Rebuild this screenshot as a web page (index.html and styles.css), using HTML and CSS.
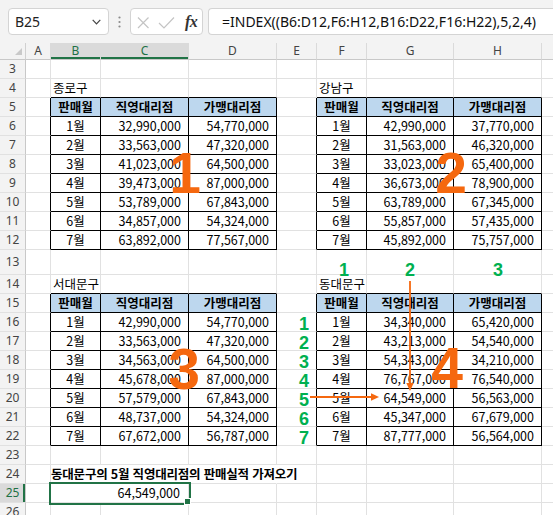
FILE: index.html
```html
<!DOCTYPE html>
<html lang="ko">
<head>
<meta charset="utf-8">
<link rel="stylesheet" href="styles.css">
</head>
<body>
<div class="app">
  <div class="fbar">
    <div class="namebox"><span>B25</span><svg class="chev" width="9" height="6" viewBox="0 0 9 6"><path d="M0.7 0.8 L4.5 4.8 L8.3 0.8" fill="none" stroke="#444" stroke-width="1.2"/></svg></div>
    <div class="dots"><svg width="3" height="12" viewBox="0 0 3 12"><circle cx="1.5" cy="1.5" r="1.1" fill="#8a8a8a"/><circle cx="1.5" cy="6" r="1.1" fill="#8a8a8a"/><circle cx="1.5" cy="10.5" r="1.1" fill="#8a8a8a"/></svg></div>
    <div class="fxbox">
      <svg class="xc" width="50" height="25" viewBox="0 0 50 25"><path d="M7 8.5 L17.5 19 M17.5 8.5 L7 19" stroke="#c4c4c4" stroke-width="1.2" fill="none"/><path d="M28 14 L33 19 L43 8.5" stroke="#c4c4c4" stroke-width="1.2" fill="none"/></svg>
      <span class="fx">fx</span>
    </div>
    <div class="formula">=INDEX((B6:D12,F6:H12,B16:D22,F16:H22),5,2,4)</div>
  </div>

  <table class="sheet">
    <colgroup>
      <col class="w0"><col class="wa"><col class="wb"><col class="wc"><col class="wd"><col class="we"><col class="wf"><col class="wg"><col class="wh"><col class="wi">
    </colgroup>
    <tr class="hr">
      <th class="corner"><svg width="26" height="16" viewBox="0 0 26 16"><polygon points="22,5 22,12 15,12" fill="#c9c9c9"/></svg></th>
      <th class="ch">A</th><th class="ch chs">B</th><th class="ch chs">C</th><th class="ch">D</th><th class="ch">E</th><th class="ch">F</th><th class="ch">G</th><th class="ch">H</th><th class="ch"></th>
    </tr>
    <tr><th class="rh">3</th><td></td><td></td><td></td><td></td><td></td><td></td><td></td><td></td><td></td></tr>
    <tr><th class="rh">4</th><td></td><td class="tb t">종로구</td><td class="tb"></td><td class="tb"></td><td></td><td class="tb t">강남구</td><td class="tb"></td><td class="tb"></td><td></td></tr>
    <tr><th class="rh">5</th><td class="lb"></td><td class="h">판매월</td><td class="h">직영대리점</td><td class="h">가맹대리점</td><td class="lb"></td><td class="h">판매월</td><td class="h">직영대리점</td><td class="h">가맹대리점</td><td></td></tr>
    <tr><th class="rh">6</th><td class="lb"></td><td class="k m">1월</td><td class="k n">32,990,000</td><td class="k n">54,770,000</td><td class="lb"></td><td class="k m">1월</td><td class="k n">42,990,000</td><td class="k n">37,770,000</td><td></td></tr>
    <tr><th class="rh">7</th><td class="lb"></td><td class="k m">2월</td><td class="k n">33,563,000</td><td class="k n">47,320,000</td><td class="lb"></td><td class="k m">2월</td><td class="k n">31,563,000</td><td class="k n">46,320,000</td><td></td></tr>
    <tr><th class="rh">8</th><td class="lb"></td><td class="k m">3월</td><td class="k n">41,023,000</td><td class="k n">64,500,000</td><td class="lb"></td><td class="k m">3월</td><td class="k n">33,023,000</td><td class="k n">65,400,000</td><td></td></tr>
    <tr><th class="rh">9</th><td class="lb"></td><td class="k m">4월</td><td class="k n">39,473,000</td><td class="k n">87,000,000</td><td class="lb"></td><td class="k m">4월</td><td class="k n">36,673,000</td><td class="k n">78,900,000</td><td></td></tr>
    <tr><th class="rh">10</th><td class="lb"></td><td class="k m">5월</td><td class="k n">53,789,000</td><td class="k n">67,843,000</td><td class="lb"></td><td class="k m">5월</td><td class="k n">63,789,000</td><td class="k n">67,345,000</td><td></td></tr>
    <tr><th class="rh">11</th><td class="lb"></td><td class="k m">6월</td><td class="k n">34,857,000</td><td class="k n">54,324,000</td><td class="lb"></td><td class="k m">6월</td><td class="k n">55,857,000</td><td class="k n">57,435,000</td><td></td></tr>
    <tr><th class="rh">12</th><td class="lb"></td><td class="k m">7월</td><td class="k n">63,892,000</td><td class="k n">77,567,000</td><td class="lb"></td><td class="k m">7월</td><td class="k n">45,892,000</td><td class="k n">75,757,000</td><td></td></tr>
    <tr class="tall"><th class="rh">13</th><td></td><td></td><td></td><td></td><td></td><td></td><td></td><td></td><td></td></tr>
    <tr><th class="rh">14</th><td></td><td class="tb t">서대문구</td><td class="tb"></td><td class="tb"></td><td></td><td class="tb t">동대문구</td><td class="tb"></td><td class="tb"></td><td></td></tr>
    <tr><th class="rh">15</th><td class="lb"></td><td class="h">판매월</td><td class="h">직영대리점</td><td class="h">가맹대리점</td><td class="lb"></td><td class="h">판매월</td><td class="h">직영대리점</td><td class="h">가맹대리점</td><td></td></tr>
    <tr><th class="rh">16</th><td class="lb"></td><td class="k m">1월</td><td class="k n">42,990,000</td><td class="k n">54,770,000</td><td class="lb"></td><td class="k m">1월</td><td class="k n">34,340,000</td><td class="k n">65,420,000</td><td></td></tr>
    <tr><th class="rh">17</th><td class="lb"></td><td class="k m">2월</td><td class="k n">33,563,000</td><td class="k n">47,320,000</td><td class="lb"></td><td class="k m">2월</td><td class="k n">43,213,000</td><td class="k n">54,540,000</td><td></td></tr>
    <tr><th class="rh">18</th><td class="lb"></td><td class="k m">3월</td><td class="k n">34,563,000</td><td class="k n">64,500,000</td><td class="lb"></td><td class="k m">3월</td><td class="k n">54,343,000</td><td class="k n">34,210,000</td><td></td></tr>
    <tr><th class="rh">19</th><td class="lb"></td><td class="k m">4월</td><td class="k n">45,678,000</td><td class="k n">87,000,000</td><td class="lb"></td><td class="k m">4월</td><td class="k n">76,767,000</td><td class="k n">76,540,000</td><td></td></tr>
    <tr><th class="rh">20</th><td class="lb"></td><td class="k m">5월</td><td class="k n">57,579,000</td><td class="k n">67,843,000</td><td class="lb"></td><td class="k m">5월</td><td class="k n">64,549,000</td><td class="k n">56,563,000</td><td></td></tr>
    <tr><th class="rh">21</th><td class="lb"></td><td class="k m">6월</td><td class="k n">48,737,000</td><td class="k n">54,324,000</td><td class="lb"></td><td class="k m">6월</td><td class="k n">45,347,000</td><td class="k n">67,679,000</td><td></td></tr>
    <tr><th class="rh">22</th><td class="lb"></td><td class="k m">7월</td><td class="k n">67,672,000</td><td class="k n">56,787,000</td><td class="lb"></td><td class="k m">7월</td><td class="k n">87,777,000</td><td class="k n">56,564,000</td><td></td></tr>
    <tr><th class="rh">23</th><td></td><td></td><td></td><td></td><td></td><td></td><td></td><td></td><td></td></tr>
    <tr><th class="rh">24</th><td></td><td class="nr ttl">동대문구의 5월 직영대리점의 판매실적 가져오기</td><td class="nr"></td><td class="nr"></td><td></td><td></td><td></td><td></td><td></td></tr>
    <tr><th class="rh rhs">25</th><td></td><td class="n sel" colspan="2">64,549,000</td><td></td><td></td><td></td><td></td><td></td><td></td></tr>
    <tr><th class="rh">26</th><td></td><td></td><td></td><td></td><td></td><td></td><td></td><td></td><td></td></tr>
  </table>

  <svg class="ov" width="553" height="515" viewBox="0 0 553 515">
    <text class="big" x="185" y="193">1</text>
    <text class="big" x="451" y="193">2</text>
    <text class="big" x="184" y="389">3</text>
    <text class="big" x="447" y="388">4</text>
    <text class="gn" x="344" y="276">1</text>
    <text class="gn" x="410" y="276">2</text>
    <text class="gn" x="498" y="276">3</text>
    <text class="gn" x="304" y="330">1</text>
    <text class="gn" x="304" y="349">2</text>
    <text class="gn" x="304" y="368">3</text>
    <text class="gn" x="304" y="387">4</text>
    <text class="gn" x="304" y="406">5</text>
    <text class="gn" x="304" y="425">6</text>
    <text class="gn" x="304" y="444">7</text>
    <line class="ar" x1="410" y1="281" x2="410" y2="384"/>
    <polygon class="ah" points="406.3,383 413.7,383 410,391"/>
    <line class="ar" x1="310" y1="397" x2="372" y2="397"/>
    <polygon class="ah" points="371,393.3 371,400.7 379,397"/>
  </svg>
</div>
</body>
</html>
```
FILE: styles.css
```css
html, body {
  margin: 0;
  padding: 0;
  overflow: hidden;
  background: #fff;
}
.app {
  position: relative;
  width: 553px;
  height: 515px;
  overflow: hidden;
}
.fbar {
  height: 43px;
  box-sizing: border-box;
  background: #f3f3f3;
  display: flex;
  align-items: flex-start;
  padding: 8px 0 0 8px;
}
.namebox {
  width: 101px;
  height: 27px;
  box-sizing: border-box;
  background: #fff;
  border: 1px solid #d4d4d4;
  border-radius: 4px;
  display: flex;
  align-items: center;
  justify-content: space-between;
  padding: 0 7px 0 6px;
  font: 14px "Noto Sans", sans-serif;
  color: #222;
}
.chev { display: block; }
.dots {
  width: 21px;
  height: 27px;
  display: flex;
  align-items: center;
  justify-content: center;
}
.dots svg { display: block; }
.fxbox {
  width: 73px;
  height: 27px;
  box-sizing: border-box;
  background: #fff;
  border: 1px solid #d4d4d4;
  border-radius: 4px;
  display: flex;
  align-items: center;
}
.xc { display: block; }
.fx {
  margin-left: 4px;
  font: italic 700 16px "Liberation Serif", serif;
  color: #333;
  letter-spacing: -0.5px;
}
.formula {
  margin-left: 5px;
  flex: 1;
  height: 27px;
  box-sizing: border-box;
  background: #fff;
  border: 1px solid #d4d4d4;
  border-right: none;
  border-radius: 4px 0 0 4px;
  padding-left: 13px;
  display: flex;
  align-items: center;
  font: 14px "Noto Sans", sans-serif;
  color: #111;
  white-space: nowrap;
}

.sheet {
  border-collapse: separate;
  border-spacing: 0;
  table-layout: fixed;
  width: 572px;
  font-family: "Noto Sans CJK KR", "Noto Sans", sans-serif;
  font-size: 12.5px;
  color: #000;
}
.w0 { width: 26px; }
.wa { width: 25px; }
.wb { width: 50px; }
.wc { width: 88px; }
.wd { width: 88px; }
.we { width: 40px; }
.wf { width: 50px; }
.wg { width: 87px; }
.wh { width: 88px; }
.wi { width: 30px; }

.sheet tr { height: 19px; }
.sheet tr.hr { height: 17px; }
.sheet tr.tall { height: 25px; }

.sheet td {
  padding: 1px 0 0 0;
  border-right: 1px solid #e1e1e1;
  border-bottom: 1px solid #e1e1e1;
  white-space: nowrap;
  overflow: visible;
  vertical-align: middle;
  line-height: 1;
  box-sizing: border-box;
}
.sheet th {
  padding: 0;
  font: 400 12px "Noto Sans", sans-serif;
  color: #444;
  text-align: center;
  vertical-align: middle;
  line-height: 1;
  background: #f3f3f3;
}
.corner {
  border-right: 1px solid #d0d0d0;
  border-bottom: 1px solid #c8c8c8;
}
.corner svg { display: block; }
.ch {
  border-right: 1px solid #dadada;
  border-bottom: 1px solid #c8c8c8;
}
.chs {
  background: #dadada !important;
  color: #1e7145 !important;
  box-shadow: inset 0 -2px 0 #217346;
}
.rh {
  border-right: 1px solid #c8c8c8;
  border-bottom: 1px solid #e1e1e1;
}
.rhs {
  background: #dadada !important;
  color: #1e7145 !important;
  box-shadow: inset -2px 0 0 #217346;
}

.sheet td.k, .sheet td.h {
  border-right-color: #000;
  border-bottom-color: #000;
}
.sheet td.lb { border-right-color: #000; }
.sheet td.tb { border-bottom-color: #000; }
.sheet td.nr { border-right-color: transparent; }
.h {
  background: #bdd7ee;
  font-weight: 700;
  text-align: center;
}
.m { text-align: center; }
.n {
  text-align: right;
  padding-right: 7px !important;
}
.t { padding-left: 2px !important; }
.ttl {
  font-weight: 700;
  letter-spacing: -0.2px;
}
.sel {
  position: relative;
  outline: 2px solid #217346;
  outline-offset: 0;
  padding-right: 8px !important;
}
.sel::after {
  content: "";
  position: absolute;
  right: -3px;
  bottom: -3px;
  width: 5px;
  height: 5px;
  background: #217346;
  border: 1px solid #fff;
}

.ov {
  position: absolute;
  left: 0;
  top: 0;
  pointer-events: none;
}
.big {
  font: 700 57px "Liberation Sans", sans-serif;
  fill: #f5680f;
  text-anchor: middle;
}
.gn {
  font: 700 18px "Liberation Sans", sans-serif;
  fill: #00b050;
  text-anchor: middle;
}
.ar {
  stroke: #f5680f;
  stroke-width: 1.8;
}
.ah { fill: #f5680f; }
```
